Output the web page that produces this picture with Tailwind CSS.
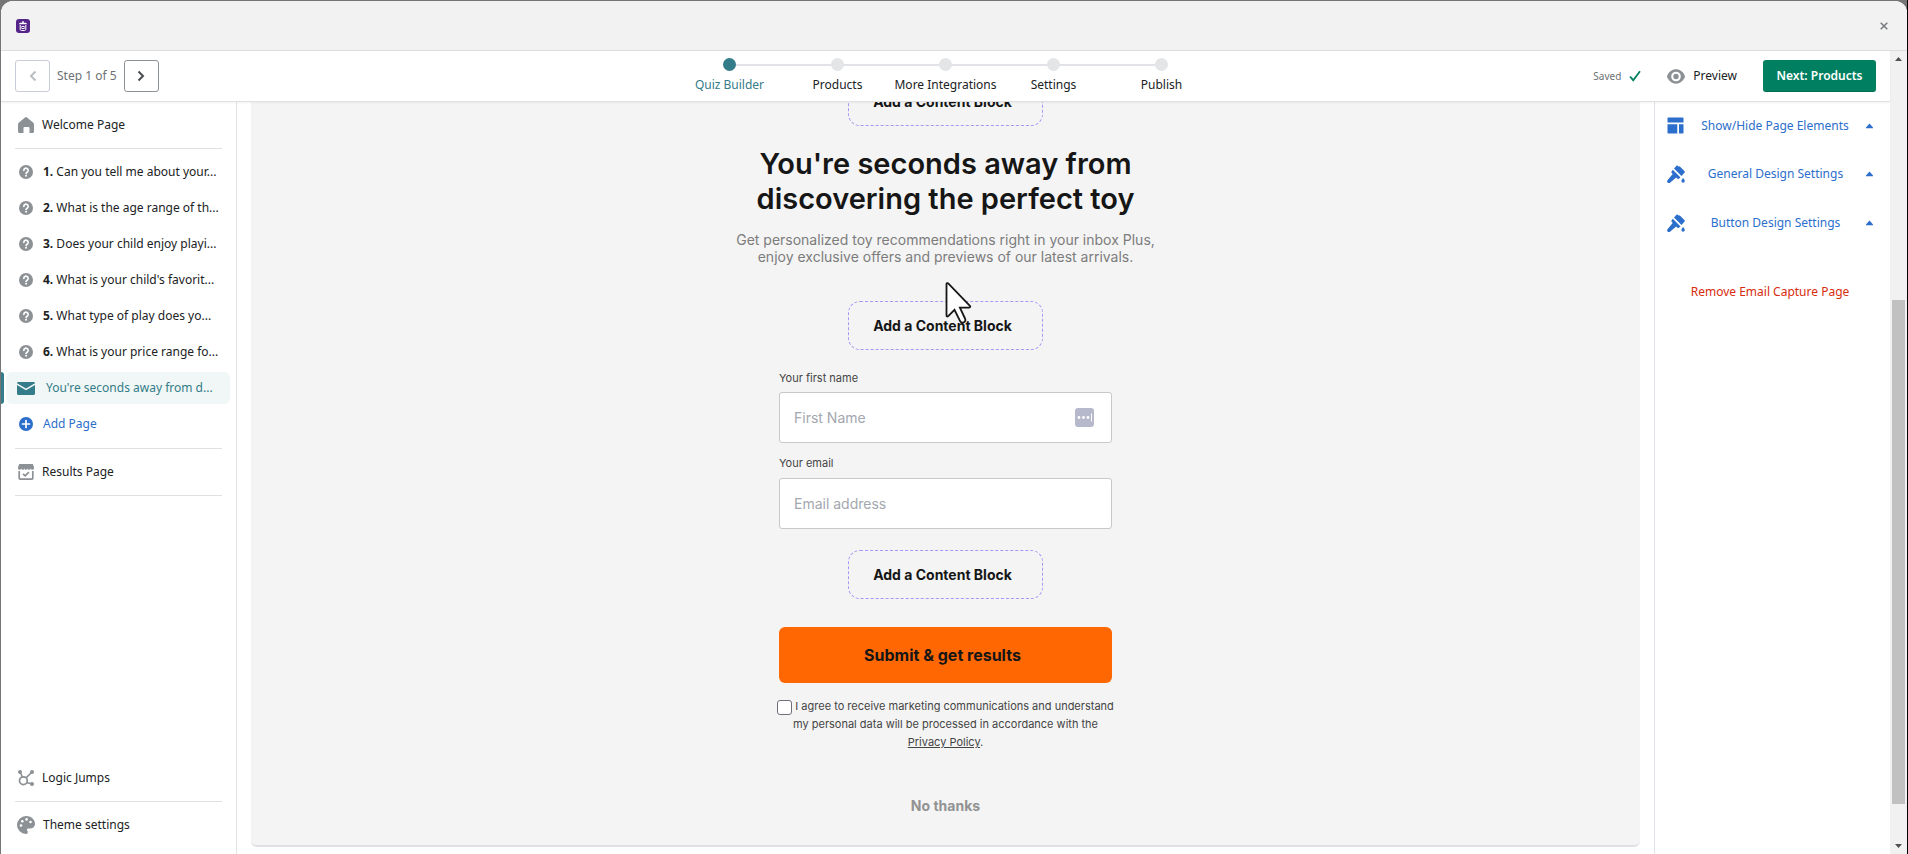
<!DOCTYPE html>
<html lang="en">
<head>
    <meta charset="UTF-8">
    <meta name="viewport" content="width=device-width, initial-scale=1.0">
    <title>Quiz Builder</title>
    <script src="https://cdn.jsdelivr.net/npm/@tailwindcss/browser@4"></script>
</head>
<body class="bg-[#757575] font-['Noto_Sans',sans-serif] text-[12px] leading-5 text-[#202223]">
    <!-- Shared icons -->
    <svg class="hidden">
        <symbol id="icon-question" viewBox="0 0 20 20">
            <circle cx="10" cy="10" r="10" fill="#8c9196"/>
            <path d="M6.900 7.700a3.100 3.100 0 1 1 4.700 2.600c-.9.600-1.500 1-1.500 2" fill="none" stroke="#fff" stroke-width="2.300" stroke-linecap="round"/>
            <circle cx="10.100" cy="15.400" r="1.400" fill="#fff"/>
        </symbol>
        <symbol id="icon-brush" viewBox="0 0 18 18">
            <path d="M9.500.8a1 1 0 0 1 1.400 0l1 1 .7-.5 5 5c.4.4.4.9 0 1.300L14.500 11 7 3.500z"/>
            <path d="M5.800 4.800l7.700 7.700-1.700 1.300a1 1 0 0 1-1.300 0l-1.300-1.200-5.900 5a1.800 1.800 0 0 1-2.600-2.600l5-5.900-1.100-1.300a1 1 0 0 1 0-1.300z"/>
            <path d="M16.100 13c1.200 1.400 1.700 2.200 1.700 3a1.700 1.700 0 0 1-3.400 0c0-.8.500-1.600 1.700-3z"/>
        </symbol>
    </svg>

    <div class="pt-px pl-px h-screen border-r border-black">
        <div class="h-full flex flex-col bg-white rounded-t-xl overflow-hidden">

            <!-- Title bar -->
            <header class="h-[50px] shrink-0 flex items-center justify-between px-[15px] bg-[#f2f2f2] border-b border-[#dcdddf]">
                <svg class="w-3.5 h-3.5" viewBox="0 0 14 14">
                    <rect width="14" height="14" rx="3" fill="#552488"/>
                    <path d="M3 5.200c0-1 .8-1.500 1.700-1.500h1.500V2.200h1.600v1.500h1.500c.9 0 1.700.5 1.700 1.500z" fill="#fff"/>
                    <path d="M4.200 6v4.300c0 .7.500 1.200 1.200 1.200h3.200c.7 0 1.200-.5 1.200-1.200V6" stroke="#fff" fill="none"/>
                    <rect x="6" y="7.500" width="2" height="2" fill="none" stroke="#fff"/>
                </svg>
                <button type="button" aria-label="Close" class="p-1">
                    <svg class="w-2 h-2" viewBox="0 0 8 8"><path d="M.7.7l6.600 6.600M7.300.7L.7 7.300" stroke="#777b80" stroke-width="1.500"/></svg>
                </button>
            </header>

            <div class="flex-1 min-h-0 flex">
                <div class="flex-1 min-w-0 flex flex-col">

                    <!-- Toolbar -->
                    <div class="h-[51px] shrink-0 grid grid-cols-[1fr_auto_1fr] items-center px-3.5 border-b border-[#dfe0e4] shadow-xs relative whitespace-nowrap">
                        <div class="flex items-center gap-[7px] text-[#6d7175]">
                            <button type="button" aria-label="Previous step" class="w-[35px] h-8 flex items-center justify-center border border-[#c9ccdb] rounded-[3px]">
                                <svg class="w-2.5 h-3" viewBox="0 0 10 12"><path d="M7.500 1.500L3 6l4.500 4.500" fill="none" stroke="#babec3" stroke-width="2"/></svg>
                            </button>
                            <span>Step 1 of 5</span>
                            <button type="button" aria-label="Next step" class="w-[35px] h-8 flex items-center justify-center border border-[#8c9196] rounded-[3px]">
                                <svg class="w-2.5 h-3" viewBox="0 0 10 12"><path d="M2.500 1.500L7 6l-4.500 4.500" fill="none" stroke="#4a4d50" stroke-width="2"/></svg>
                            </button>
                        </div>

                        <div class="relative">
                            <div class="absolute left-[54px] right-[54px] top-[6px] h-0.5 bg-[#e1e3e9]"></div>
                            <ol class="relative grid grid-cols-[repeat(5,108px)] text-center">
                                <li class="flex flex-col items-center gap-1 text-[#347c89]"><span class="w-[13px] h-[13px] rounded-full bg-[#347c89]"></span>Quiz Builder</li>
                                <li class="flex flex-col items-center gap-1"><span class="w-[13px] h-[13px] rounded-full bg-[#e4e5e7]"></span>Products</li>
                                <li class="flex flex-col items-center gap-1"><span class="w-[13px] h-[13px] rounded-full bg-[#e4e5e7]"></span>More Integrations</li>
                                <li class="flex flex-col items-center gap-1"><span class="w-[13px] h-[13px] rounded-full bg-[#e4e5e7]"></span>Settings</li>
                                <li class="flex flex-col items-center gap-1"><span class="w-[13px] h-[13px] rounded-full bg-[#e4e5e7]"></span>Publish</li>
                            </ol>
                        </div>

                        <div class="flex items-center justify-end">
                            <span class="text-[10px] text-[#6d7175] mr-2">Saved</span>
                            <svg class="w-3 h-3 mr-[26px]" viewBox="0 0 12 12"><path d="M1 6.500l3.200 3.700L11 1.300" fill="none" stroke="#008060" stroke-width="1.800"/></svg>
                            <button type="button" class="flex items-center gap-2 mr-[26px]">
                                <svg class="w-[18px] h-[15px]" viewBox="0 0 18 15">
                                    <path fill="#8c9196" fill-rule="evenodd" d="M18 7.200C16.500 3 12.900.3 9 .3S1.500 3 0 7.200v.6c1.500 4.200 5.100 6.900 9 6.900s7.500-2.700 9-6.900zM9 12.300a4.800 4.800 0 1 1 0-9.600 4.800 4.800 0 0 1 0 9.600z"/>
                                    <circle cx="9" cy="7.500" r="2.700" fill="#8c9196"/>
                                </svg>
                                Preview
                            </button>
                            <button type="button" class="w-[113px] h-8 rounded-[3px] bg-[#008060] text-white font-semibold border-b border-[#006e52]">Next: Products</button>
                        </div>
                    </div>

                    <div class="flex-1 min-h-0 flex">
                        <!-- Pages sidebar -->
                        <nav class="w-[236px] shrink-0 flex flex-col justify-between border-r border-[#e1e3e5] pb-1.5 whitespace-nowrap">
                            <div>
                                <a href="#" class="flex items-center gap-2 h-[47px] mx-3.5 pl-[3px] border-b border-[#dfe0e2]">
                                    <svg class="w-4 h-4" viewBox="0 0 16 16"><path d="M7 .5a1.500 1.500 0 0 1 2 0l6.300 5.300c.5.400.7 1 .7 1.600v7.100c0 .8-.6 1.500-1.500 1.500h-3V11a1 1 0 0 0-1-1h-4a1 1 0 0 0-1 1v5h-4C.6 16 0 15.300 0 14.500V7.400c0-.6.200-1.200.7-1.600z" fill="#8c9196"/></svg>
                                    <span>Welcome Page</span>
                                </a>
                                <ul class="pt-[5px]">
                                    <li><a href="#" class="flex items-center gap-2.5 h-9 pl-[18px]"><svg class="w-3.5 h-3.5"><use href="#icon-question"/></svg><span><b>1.</b> Can you tell me about your...</span></a></li>
                                    <li><a href="#" class="flex items-center gap-2.5 h-9 pl-[18px]"><svg class="w-3.5 h-3.5"><use href="#icon-question"/></svg><span><b>2.</b> What is the age range of th...</span></a></li>
                                    <li><a href="#" class="flex items-center gap-2.5 h-9 pl-[18px]"><svg class="w-3.5 h-3.5"><use href="#icon-question"/></svg><span><b>3.</b> Does your child enjoy playi...</span></a></li>
                                    <li><a href="#" class="flex items-center gap-2.5 h-9 pl-[18px]"><svg class="w-3.5 h-3.5"><use href="#icon-question"/></svg><span><b>4.</b> What is your child's favorit...</span></a></li>
                                    <li><a href="#" class="flex items-center gap-2.5 h-9 pl-[18px]"><svg class="w-3.5 h-3.5"><use href="#icon-question"/></svg><span><b>5.</b> What type of play does yo...</span></a></li>
                                    <li><a href="#" class="flex items-center gap-2.5 h-9 pl-[18px]"><svg class="w-3.5 h-3.5"><use href="#icon-question"/></svg><span><b>6.</b> What is your price range fo...</span></a></li>
                                    <li class="flex h-9 py-0.5">
                                        <span class="w-[3px] rounded-r-sm bg-[#347c89]"></span>
                                        <a href="#" class="flex-1 flex items-center gap-[11px] ml-0.5 mr-1.5 pl-[11px] rounded-md bg-[#f0f7f6] text-[#347c89]">
                                            <svg class="w-[18px] h-[13px]" viewBox="0 0 18 13"><path d="M0 1.200A1.200 1.200 0 0 1 1.200 0h15.600A1.200 1.200 0 0 1 18 1.200L9 6.500z" fill="#347c89"/><path d="M0 2.900l9 5.400 9-5.400v8.600a1.500 1.500 0 0 1-1.500 1.500h-15A1.500 1.500 0 0 1 0 11.500z" fill="#347c89"/></svg>
                                            <span>You're seconds away from d...</span>
                                        </a>
                                    </li>
                                    <li>
                                        <a href="#" class="flex items-center gap-2.5 h-9 pl-[18px] text-[#2c6ecb]">
                                            <svg class="w-3.5 h-3.5" viewBox="0 0 14 14"><circle cx="7" cy="7" r="7" fill="#2c6ecb"/><path d="M7 3.500v7M3.500 7h7" stroke="#fff" stroke-width="1.700" stroke-linecap="round"/></svg>
                                            <span>Add Page</span>
                                        </a>
                                    </li>
                                </ul>
                                <a href="#" class="flex items-center gap-2 h-12 mt-1.5 mx-3.5 pl-[3px] border-y border-[#dfe0e2]">
                                    <svg class="w-4 h-4" viewBox="0 0 16 16">
                                        <path d="M1.200 0h13.600l1.200 3.200v1a1.600 1.600 0 0 1-3.200 0 1.600 1.600 0 0 1-3.200 0 1.600 1.600 0 0 1-3.200 0 1.600 1.600 0 0 1-3.200 0 1.600 1.600 0 0 1-3.200 0v-1z" fill="#8c9196"/>
                                        <path d="M1.200 7v7.200c0 .5.400.9.900.9h11.800c.5 0 .9-.4.900-.9V7M5 9.800l2.200 2.100 3.700-3.800" fill="none" stroke="#8c9196" stroke-width="1.700"/>
                                    </svg>
                                    <span>Results Page</span>
                                </a>
                            </div>
                            <div>
                                <a href="#" class="flex items-center gap-2 h-[47px] mx-3.5 pl-[3px] border-b border-[#dfe0e2]">
                                    <svg class="w-4 h-4" viewBox="0 0 16 16">
                                        <path d="M2 2l2.500 5M14 2L8.300 7.600M8.500 12.500L14 14" stroke="#8c9196" stroke-width="1.600"/>
                                        <circle cx="5.400" cy="10.700" r="3.900" fill="none" stroke="#8c9196" stroke-width="1.700"/>
                                        <circle cx="2" cy="2" r="2" fill="#8c9196"/><circle cx="14" cy="2" r="2" fill="#8c9196"/><circle cx="14" cy="14" r="2" fill="#8c9196"/>
                                    </svg>
                                    <span>Logic Jumps</span>
                                </a>
                                <a href="#" class="flex items-center gap-2 h-[46px] mx-3.5 pl-0.5">
                                    <svg class="w-[18px] h-[18px]" viewBox="0 0 18 18">
                                        <path d="M9 0c5 0 9 3.500 9 7.800 0 3-2.200 4.700-4.700 4.700h-2c-1 0-1.600.8-1.300 1.700.2.700.9 1 .9 1.900 0 1.200-.9 1.900-1.900 1.900a9 9 0 1 1 0-18z" fill="#8c9196"/>
                                        <circle cx="4" cy="9.500" r="1.300" fill="#fff"/><circle cx="5.300" cy="5.200" r="1.300" fill="#fff"/><circle cx="9.600" cy="3.400" r="1.300" fill="#fff"/><circle cx="13.500" cy="6" r="1.300" fill="#fff"/>
                                    </svg>
                                    <span>Theme settings</span>
                                </a>
                            </div>
                        </nav>

                        <!-- Quiz canvas -->
                        <main class="flex-1 min-w-0 px-3.5 pb-[7px] overflow-hidden">
                            <div class="h-full flex flex-col items-center overflow-hidden rounded-b-md bg-[#f4f4f4] border-b-2 border-[#dfe0e3] font-['Inter',sans-serif]">
                                <button type="button" class="-mt-[25px] w-[195px] h-[49px] shrink-0 pr-1.5 border border-dashed border-[#a996f5] rounded-xl text-[14px] font-bold text-[#161616]">Add a Content Block</button>
                                <h1 class="mt-5 text-center text-[29px] leading-[35px] font-semibold text-[#161616] [font-optical-sizing:none]">You're seconds away from<br>discovering the perfect toy</h1>
                                <p class="mt-[15px] text-center text-[14px] leading-[17px] text-[#7c7c7c]">Get personalized toy recommendations right in your inbox Plus,<br>enjoy exclusive offers and previews of our latest arrivals.</p>
                                <div class="relative mt-9">
                                    <button type="button" class="block w-[195px] h-[49px] pr-1.5 border border-dashed border-[#a996f5] rounded-xl text-[14px] font-bold text-[#161616]">Add a Content Block</button>
                                    <!-- Pointer -->
                                    <svg class="absolute left-[97px] -top-[19px] w-7 h-[42px]" viewBox="0 0 28 42"><path d="M1.500 2.200v31.300c0 1 1 1.300 1.700.6l6.300-6.300 5.600 11.300c.8 1.600 2.200 1.900 3.700 1.200 1.600-.8 2-2.200 1.200-3.800l-5.100-10.900h9.300c1 0 1.400-1 .7-1.700L3.200 1.400c-.7-.7-1.700-.2-1.700.8z" fill="#fff" stroke="#161616" stroke-width="1.800"/></svg>
                                </div>
                                <form class="w-[333px] flex flex-col items-center text-[11px] leading-[18px] text-[#444]" onsubmit="return false">
                                    <label for="first-name" class="mt-[19px] self-start">Your first name</label>
                                    <div class="relative w-full mt-[5px]">
                                        <input id="first-name" type="text" placeholder="First Name" class="w-full h-[51px] px-3.5 bg-white border border-[#c8c8c8] rounded-[3px] text-[14px] placeholder:text-[#a3a7ae]">
                                        <svg class="absolute right-[18px] top-4 w-[19px] h-[19px]" viewBox="0 0 19 19"><rect width="19" height="19" rx="3" fill="#b5b9cb"/><circle cx="4" cy="9.500" r="1.400" fill="#fff"/><circle cx="8.500" cy="9.500" r="1.400" fill="#fff"/><circle cx="13" cy="9.500" r="1.400" fill="#fff"/><path d="M16.500 5.500v8" stroke="#fff"/></svg>
                                    </div>
                                    <label for="email" class="mt-[11px] self-start">Your email</label>
                                    <input id="email" type="email" placeholder="Email address" class="w-full h-[51px] mt-1.5 px-3.5 bg-white border border-[#c8c8c8] rounded-[3px] text-[14px] placeholder:text-[#a3a7ae]">
                                    <button type="button" class="mt-[21px] w-[195px] h-[49px] pr-1.5 border border-dashed border-[#a996f5] rounded-xl text-[14px] font-bold text-[#161616]">Add a Content Block</button>
                                    <button type="submit" class="mt-7 w-full h-14 pr-1.5 rounded-md bg-[#ff6702] text-[16px] font-bold text-[#161616]">Submit &amp; get results</button>
                                    <div class="mt-[14px] text-center whitespace-nowrap">
                                        <input id="consent" type="checkbox" class="appearance-none align-middle w-[15px] h-[15px] bg-white border border-[#6f6f7c] rounded-[3px]">
                                        <label for="consent">I agree to receive marketing communications and understand<br>my personal data will be processed in accordance with the</label><br>
                                        <a href="#" class="underline">Privacy Policy</a>.
                                    </div>
                                </form>
                                <button type="button" class="mt-[45px] text-[14px] font-bold text-[#929292]">No thanks</button>
                            </div>
                        </main>

                        <!-- Design panel -->
                        <aside class="w-[236px] shrink-0 border-l border-[#e1e3e8] pl-3 pr-[17px] text-[#2c6ecb]">
                            <button type="button" class="w-full h-[47px] flex items-center justify-between">
                                <svg class="w-[17px] h-[17px]" viewBox="0 0 17 17" fill="#2c6ecb"><path d="M1.300.5h14.400c.5 0 .8.300.8.800V5.500H.5V1.300c0-.5.300-.8.800-.8z"/><path d="M.5 7.200h9.800v9.300h-9a.8.8 0 0 1-.8-.8zM12 7.200h4.500v8.500c0 .5-.3.800-.8.800H12z"/></svg>
                                Show/Hide Page Elements
                                <svg class="w-[7px] h-1.5" viewBox="0 0 7 6"><path d="M0 5.300V4.500L3.500.6 7 4.500v.8z" fill="#2c6ecb"/></svg>
                            </button>
                            <button type="button" class="w-full h-[49px] flex items-center justify-between">
                                <svg class="w-[18px] h-[18px]" fill="#2c6ecb"><use href="#icon-brush"/></svg>
                                General Design Settings
                                <svg class="w-[7px] h-1.5" viewBox="0 0 7 6"><path d="M0 5.300V4.500L3.500.6 7 4.500v.8z" fill="#2c6ecb"/></svg>
                            </button>
                            <button type="button" class="w-full h-[49px] flex items-center justify-between">
                                <svg class="w-[18px] h-[18px]" fill="#2c6ecb"><use href="#icon-brush"/></svg>
                                Button Design Settings
                                <svg class="w-[7px] h-1.5" viewBox="0 0 7 6"><path d="M0 5.300V4.500L3.500.6 7 4.500v.8z" fill="#2c6ecb"/></svg>
                            </button>
                            <button type="button" class="block mx-auto mt-[35px] text-[#d72c0d]">Remove Email Capture Page</button>
                        </aside>
                    </div>
                </div>

                <!-- Scrollbar -->
                <div class="w-[17px] shrink-0 flex flex-col items-center justify-between bg-[#f1f1f1] px-0.5 py-1.5">
                    <svg class="w-[7px] h-1" viewBox="0 0 7 4"><path d="M0 4L3.500 0 7 4z" fill="#505050"/></svg>
                    <div class="w-full h-[504px] mt-[198px] bg-[#c1c1c1]"></div>
                    <svg class="w-[7px] h-1" viewBox="0 0 7 4"><path d="M0 0L3.500 4 7 0z" fill="#505050"/></svg>
                </div>
            </div>
        </div>
    </div>
</body>
</html>
